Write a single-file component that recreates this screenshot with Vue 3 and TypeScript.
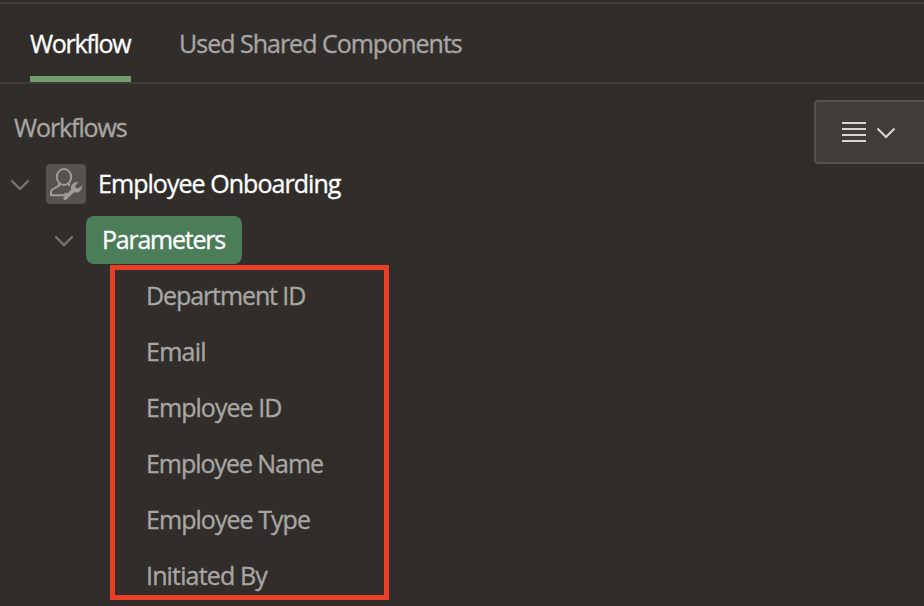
<script setup lang="ts">
interface Parameter {
  label: string
  fit: string
}

const parameters: Parameter[] = [
  { label: 'Department ID', fit: 'fit-department' },
  { label: 'Email', fit: 'fit-email' },
  { label: 'Employee ID', fit: 'fit-id' },
  { label: 'Employee Name', fit: 'fit-name' },
  { label: 'Employee Type', fit: 'fit-type' },
  { label: 'Initiated By', fit: 'fit-initiated' },
]
</script>

<template>
  <main class="panel">
    <nav class="tabs">
      <a class="tab active"><span class="fit-workflow">Workflow</span></a>
      <a class="tab"><span>Used Shared Components</span></a>
    </nav>
    <header class="toolbar">
      <h1 class="title"><span class="fit-title">Workflows</span></h1>
      <button class="menu" aria-label="Menu">
        <svg width="56" height="28" viewBox="0 0 56 28">
          <path d="M0 5h24M0 11h24M0 17h24M0 23h24" />
          <path class="caret" d="M35.5 10.5l8.5 8.5 8.5-8.5" />
        </svg>
      </button>
    </header>
    <section class="tree">
      <div class="row root">
        <svg class="chevron" width="20" height="12" viewBox="0 0 20 12"><path d="M2 2l8 8 8-8" /></svg>
        <span class="badge">
          <svg width="40" height="40" viewBox="0 0 40 40">
            <ellipse cx="18" cy="13" rx="7.2" ry="8" />
            <path d="M13 19.5v2.2L6.5 25.5Q5 26.500 5 28v3.200H18.500L20.500 29M23 19.500V22" />
            <path class="wrench" d="M32.300 18.300A6 6 0 0 0 25 25.700L17.800 32.900a1.700 1.700 0 0 0 2.500 2.500L28 28.300A6 6 0 0 0 35.800 21.500L32.300 24.500 29.600 23.700 29.200 21.500Z" />
          </svg>
        </span>
        <span class="label"><span class="fit-onboarding">Employee Onboarding</span></span>
      </div>
      <div class="row group">
        <svg class="chevron" width="20" height="12" viewBox="0 0 20 12"><path d="M2 2l8 8 8-8" /></svg>
        <span class="selected"><span class="fit-parameters">Parameters</span></span>
      </div>
      <ul class="items">
        <li v-for="p in parameters" :key="p.label"><span :class="p.fit">{{ p.label }}</span></li>
      </ul>
    </section>
  </main>
</template>

<style>
body {
  background: #312d2a;
}
</style>

<style scoped>
.panel {
  box-sizing: border-box;
  height: 606px;
  padding-top: 2px;
  overflow: hidden;
  background: #312d2a;
  color: #a8a6a3;
  font: 450 25px/34px "Open Sans", "Noto Sans", sans-serif;
  letter-spacing: -1px;
  white-space: nowrap;
  -webkit-text-stroke: 0.35px currentColor;
}
.fit-workflow {
  letter-spacing: -1.3px;
}
.fit-title,
.fit-department {
  letter-spacing: -1.1px;
}
.fit-parameters {
  letter-spacing: -1.25px;
}
.fit-onboarding,
.fit-id,
.fit-type {
  letter-spacing: -0.95px;
}
.fit-name {
  letter-spacing: -1.05px;
}
.fit-email {
  letter-spacing: -0.75px;
}
.fit-initiated {
  letter-spacing: -0.85px;
}
.tabs {
  box-sizing: border-box;
  display: flex;
  gap: 48px;
  height: 82px;
  padding-left: 30px;
  border-top: 2px solid #403c38;
  border-bottom: 2px solid #403c38;
}
.tab {
  box-sizing: border-box;
  height: 78px;
  padding-top: 22px;
}
.active {
  width: 101px;
  border-bottom: 6px solid #759c6c;
  color: #fff;
}
.toolbar {
  display: flex;
  justify-content: space-between;
  height: 72px;
  padding-left: 14px;
}
.title {
  margin: 26px 0 0;
  font: inherit;
}
.menu {
  box-sizing: border-box;
  display: flex;
  align-items: center;
  width: 110px;
  height: 64px;
  margin-top: 16px;
  padding: 0 0 0 26px;
  border: 2px solid #55504b;
  border-right: 0;
  border-radius: 4px 0 0 4px;
  background: #403c38;
}
svg {
  display: block;
  flex: none;
  fill: none;
  stroke: #d8d6d3;
  stroke-width: 2;
}
.row {
  display: flex;
  align-items: center;
  height: 56px;
}
.root {
  padding-left: 10px;
}
.group {
  padding-left: 54px;
}
.chevron {
  margin-top: 1px;
  stroke: #777370;
  stroke-width: 2.4;
  stroke-linecap: round;
}
.badge {
  margin: 0 12px 0 16px;
  border-radius: 4px;
  background: #57524e;
}
.badge svg {
  stroke: #a09d99;
}
.badge .wrench {
  fill: #a09d99;
  stroke: none;
}
.label {
  margin-top: -2px;
  color: #fff;
}
.selected {
  box-sizing: border-box;
  width: 156px;
  height: 48px;
  margin-left: 12px;
  padding: 6px 16px;
  border-radius: 8px;
  background: #4a7d58;
  color: #fff;
}
.items {
  box-sizing: border-box;
  width: 279px;
  height: 335px;
  margin: -3px 0 0 110px;
  padding: 0 0 0 31px;
  border: 5px solid #ea3f26;
  list-style: none;
}
.items li {
  height: 56px;
  line-height: 51px;
}
</style>
